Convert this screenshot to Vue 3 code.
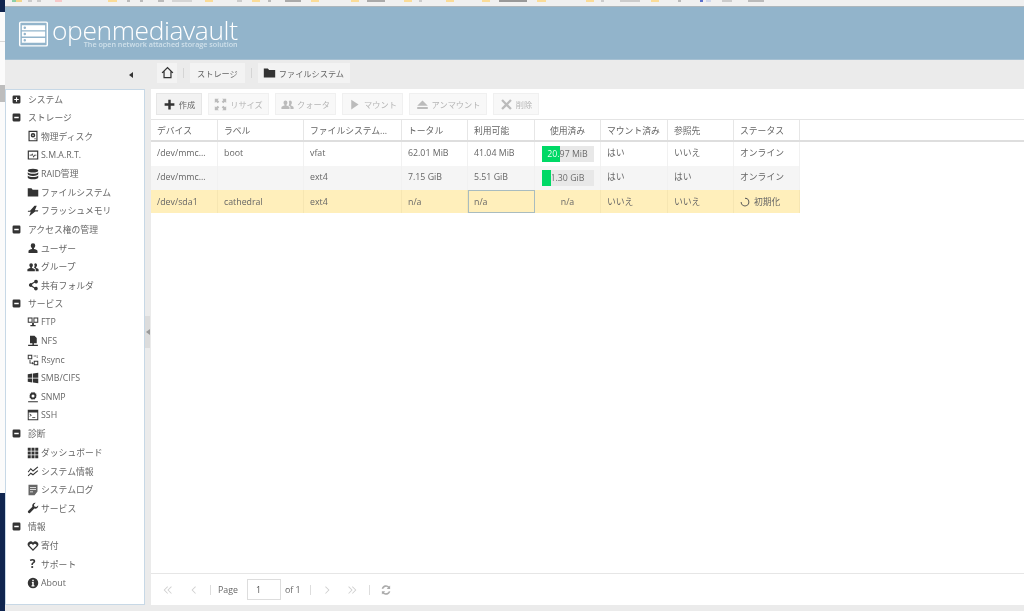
<script setup>
// svg paths, all on a 16x16 box, even-odd fill
const icons = {
  plusBox: 'M3 1h10a2 2 0 0 1 2 2v10a2 2 0 0 1-2 2H3a2 2 0 0 1-2-2V3a2 2 0 0 1 2-2z M7 4v3H4v2h3v3h2V9h3V7H9V4z',
  minusBox: 'M3 1h10a2 2 0 0 1 2 2v10a2 2 0 0 1-2 2H3a2 2 0 0 1-2-2V3a2 2 0 0 1 2-2z M4 6.5v3h8v-3z',
  disk: 'M2 1h12v14H2z M3.5 2.5v11h9v-11z M8 4a3 3 0 1 0 0 6 3 3 0 0 0 0-6z M8 6a1 1 0 1 1 0 2 1 1 0 0 1 0-2z M10 11h1.5v1.2H10z',
  smart: 'M1 2h14v12H1z M2.5 3.5v9h11v-9z M3.5 7.5H6l1-2 1.8 4 1-2h2.7v1h-2.1l-1.6 3.2L7 7.5l-.4 1H3.5z',
  raid: 'M8 1c4 0 7 1 7 2.5S12 6 8 6 1 5 1 3.5 4 1 8 1z M1 5.5C2 7 5 7.5 8 7.5s6-.5 7-2V8c0 1.5-3 2.5-7 2.5S1 9.5 1 8z M1 10c1 1.5 4 2 7 2s6-.5 7-2v2.5C15 14 12 15 8 15s-7-1-7-2.5z',
  folder: 'M1 3h5l1.5 2H15v9H1z',
  flash: 'M10 1 4 7.5H1.5L1 9h4l-2 6 8-6.5h3.5L15 7h-4.5L13 1z',
  user: 'M8 1.5a3 3 0 0 1 3 3c0 1.5-.8 3-1.7 3.6v1.2c2 .6 4.7 1.3 4.7 2.7v2.5H2V12c0-1.4 2.7-2.1 4.7-2.7V8.1C5.8 7.5 5 6 5 4.5a3 3 0 0 1 3-3z',
  group: 'M5.5 3a2.4 2.4 0 0 1 2.4 2.4c0 1.2-.6 2.4-1.3 2.9v1c1.6.5 3.9 1 3.9 2.2v2H.5v-2c0-1.2 2.3-1.7 3.9-2.2v-1C3.7 7.8 3.1 6.6 3.1 5.4A2.4 2.4 0 0 1 5.5 3z M11 3a2.4 2.4 0 0 1 2.4 2.4c0 1.2-.6 2.4-1.3 2.9v1c1.4.4 3.4 1 3.4 2.2v2h-3.9v-2c0-1-1-1.8-2.3-2.4.4-.6.8-1.6.8-2.7 0-.7-.2-1.3-.5-1.8A2.4 2.4 0 0 1 11 3z',
  share: 'M12 1a2.5 2.5 0 1 1-1.9 4.1L6.9 7a2.6 2.6 0 0 1 0 2l3.2 1.9a2.5 2.5 0 1 1-.7 1.3L6 10.3a2.5 2.5 0 1 1 0-4.6l3.5-2A2.5 2.5 0 0 1 12 1z',
  ftp: 'M1 2h6.4v7H1z M2.3 3.3v4.4h3.8V3.3z M8.6 2H15v7H8.6z M9.9 3.3v4.4h3.8V3.3z M6.8 9h2.4v3h2.3v1.8h-7V12h2.3z',
  nfs: 'M4 1h6l3 3v7H4z M7.2 11h2v2h5.3v1.5h-13V13h5.7z',
  rsync: 'M1 1h6v6H1z M2.3 2.3v3.4h3.4V2.3z M9 9h6v6H9z M10.3 10.3v3.4h3.4v-3.4z M3.4 8h1.2v3.6h2.2v-1.2L9 12.2 6.8 14v-1.2H3.4z M9 2h1.2v1.2H9z M11 2h1.2v1.2H11z M13 2h1.2v1.2H13z M13 4.2h1.2v1.2H13z',
  windows: 'M1 3l6-1v5.5H1z M8 2l7-1v6.5H8z M1 8.5h6V14l-6-1z M8 8.5h7V15l-7-1z',
  snmp: 'M8 1l1 1.3 1.6-.5.4 1.6 1.6.4-.5 1.6L13 6.5l-1.1 1.1.5 1.6-1.6.4-.4 1.6-1.6-.5L8 12l-1-1.3-1.6.5-.4-1.6-1.6-.4.5-1.6L3 6.5l1.1-1.1-.5-1.6 1.6-.4.4-1.6 1.6.5z M8 4.5a2 2 0 1 0 0 4 2 2 0 0 0 0-4z M1.5 13.5h13V15h-13z',
  ssh: 'M1 1h14v14H1z M2.3 4.5v9.2h11.4V4.5z M3.5 6l3 2.2-3 2.2V9.2l1.5-1-1.5-1z M7 10.5h4v1H7z',
  grid: 'M1 1h4v4H1z M6 1h4v4H6z M11 1h4v4h-4z M1 6h4v4H1z M6 6h4v4H6z M11 6h4v4h-4z M1 11h4v4H1z M6 11h4v4H6z M11 11h4v4h-4z',
  chart: 'M1 9l4-5 3 3 6-5 1 1-7 6-3-3-3 4z M1 14l4-4 3 2 6-5 1 1-7 6-3-2-3 3z',
  log: 'M2 1h12v9l-4 5H2z M4 4v1h8V4z M4 7v1h8V7z M4 10v1h4v-1z',
  wrench: 'M11 1a4 4 0 0 0-3.8 5.2L1.5 12A1.8 1.8 0 0 0 4 14.5l5.8-5.7A4 4 0 0 0 15 4.5l-2.5 2.3-2.6-.7-.7-2.6L11.5 1z',
  heart: 'M8 14.5 1.8 8.2A3.8 3.8 0 0 1 8 3.4a3.8 3.8 0 0 1 6.2 4.8z M8 12.2l4.8-5A2.2 2.2 0 0 0 9 5.8L8 7 7 5.8a2.2 2.2 0 0 0-3.8 1.4z',
  info: 'M8 1a7 7 0 1 1 0 14A7 7 0 0 1 8 1z M7 3.5v2h2v-2z M6.5 6.5V8H7v3H6v1.5h4V11H9V6.5z',
  home: 'M8 1 .8 8l1 1L3 7.9V15h10V7.9L14.2 9l1-1z M8 3.2l3.5 3.4v6.9h-7V6.6z',
  plus: 'M6.5 2h3v4.5H14v3H9.5V14h-3V9.5H2v-3h4.5z',
  resize: 'M1 1h5L4.5 2.5l2 2-2 2-2-2L1 6z M15 1v5l-1.5-1.5-2 2-2-2 2-2L10 1z M1 15v-5l1.5 1.5 2-2 2 2-2 2L6 15z M15 15h-5l1.5-1.5-2-2 2-2 2 2L15 10z',
  play: 'M4 2l9 6-9 6z',
  eject: 'M8 3l6.5 6.5h-13z M1.5 11h13v2.5h-13z',
  cross: 'M3.5 1.5 8 6l4.5-4.5 2 2L10 8l4.5 4.5-2 2L8 10l-4.5 4.5-2-2L6 8 1.5 3.5z',
  first: 'M7 2l1 1-5 5 5 5-1 1-6-6z M13 2l1 1-5 5 5 5-1 1-6-6z',
  prev: 'M10 2l1 1-5 5 5 5-1 1-6-6z',
  next: 'M6 2 5 3l5 5-5 5 1 1 6-6z',
  last: 'M3 2 2 3l5 5-5 5 1 1 6-6z M9 2 8 3l5 5-5 5 1 1 6-6z',
  refresh: 'M13.5 2v4.5H9l1.7-1.7A4 4 0 0 0 4.2 6.5l-2-.6a6 6 0 0 1 10-2.5z M2.5 14V9.5H7l-1.7 1.7a4 4 0 0 0 6.5-1.7l2 .6a6 6 0 0 1-10 2.5z',
  spinner: 'M8 1a7 7 0 1 1-7 7h1.6A5.4 5.4 0 1 0 8 2.6z',
  logo: 'M3 1h26a2 2 0 0 1 2 2v22a2 2 0 0 1-2 2H3a2 2 0 0 1-2-2V3a2 2 0 0 1 2-2z M3 2.5a.5.5 0 0 0-.5.5v22a.5.5 0 0 0 .5.5h26a.5.5 0 0 0 .5-.5V3a.5.5 0 0 0-.5-.5z M4 5h24v5H4z M4 11.5h24v5H4z M4 18h24v5H4z M7 6.2a1.3 1.3 0 1 0 0 2.6 1.3 1.3 0 0 0 0-2.6z M7 12.7a1.3 1.3 0 1 0 0 2.6 1.3 1.3 0 0 0 0-2.6z M7 19.2a1.3 1.3 0 1 0 0 2.6 1.3 1.3 0 0 0 0-2.6z',
};

const navItems = [
  { label: 'システム', box: 'plusBox' },
  { label: 'ストレージ', box: 'minusBox' },
  { label: '物理ディスク', icon: 'disk' },
  { label: 'S.M.A.R.T.', icon: 'smart' },
  { label: 'RAID管理', icon: 'raid' },
  { label: 'ファイルシステム', icon: 'folder' },
  { label: 'フラッシュメモリ', icon: 'flash' },
  { label: 'アクセス権の管理', box: 'minusBox' },
  { label: 'ユーザー', icon: 'user' },
  { label: 'グループ', icon: 'group' },
  { label: '共有フォルダ', icon: 'share' },
  { label: 'サービス', box: 'minusBox' },
  { label: 'FTP', icon: 'ftp' },
  { label: 'NFS', icon: 'nfs' },
  { label: 'Rsync', icon: 'rsync' },
  { label: 'SMB/CIFS', icon: 'windows' },
  { label: 'SNMP', icon: 'snmp' },
  { label: 'SSH', icon: 'ssh' },
  { label: '診断', box: 'minusBox' },
  { label: 'ダッシュボード', icon: 'grid' },
  { label: 'システム情報', icon: 'chart' },
  { label: 'システムログ', icon: 'log' },
  { label: 'サービス', icon: 'wrench' },
  { label: '情報', box: 'minusBox' },
  { label: '寄付', icon: 'heart' },
  { label: 'サポート', glyph: '?' },
  { label: 'About', icon: 'info' },
];

const tools = [
  { label: '作成', icon: 'plus', width: 46, active: true },
  { label: 'リサイズ', icon: 'resize', width: 61 },
  { label: 'クォータ', icon: 'group', width: 61 },
  { label: 'マウント', icon: 'play', width: 61 },
  { label: 'アンマウント', icon: 'eject', width: 78 },
  { label: '削除', icon: 'cross', width: 46 },
];

const columns = ['デバイス', 'ラベル', 'ファイルシステム...', 'トータル', '利用可能', '使用済み', 'マウント済み', '参照先', 'ステータス'];

const rows = [
  { device: '/dev/mmc...', label: 'boot', fs: 'vfat', total: '62.01 MiB', free: '41.04 MiB', used: '20.97 MiB', pct: 35, mounted: 'はい', ref: 'いいえ', status: 'オンライン' },
  { device: '/dev/mmc...', label: '', fs: 'ext4', total: '7.15 GiB', free: '5.51 GiB', used: '1.30 GiB', pct: 19, mounted: 'はい', ref: 'はい', status: 'オンライン' },
  { device: '/dev/sda1', label: 'cathedral', fs: 'ext4', total: 'n/a', free: 'n/a', used: 'n/a', mounted: 'いいえ', ref: 'いいえ', status: '初期化', busy: true },
];

// what is left of the browser's bookmarks bar above the header
const bookmarks = [
  [12, 6, '#8fd0a8'], [16, 6, '#f3d58c'], [28, 4, '#ccc'], [37, 4, '#ccc'], [55, 7, '#f7c9c9'],
  [108, 9, '#fbdc98'], [127, 3, '#bbb'], [140, 3, '#bbb'], [158, 6, '#bbb'], [172, 20, '#d5d5d5'],
  [205, 8, '#fbdc98'], [237, 5, '#ccc'], [252, 8, '#fbdc98'], [268, 3, '#bbb'], [285, 16, '#aaa'],
  [311, 8, '#fbdc98'], [351, 8, '#fbdc98'], [367, 18, '#aaa'], [404, 8, '#fbdc98'], [419, 3, '#ccc'],
  [446, 8, '#fbdc98'], [482, 8, '#fbdc98'], [499, 28, '#999'], [537, 9, '#fbdc98'], [586, 8, '#fbdc98'],
  [601, 3, '#ccc'], [620, 20, '#ccc'], [651, 8, '#fbdc98'], [678, 3, '#bbb'], [700, 3, '#5a70cc'], [706, 5, '#d0d8ec'],
  [722, 10, '#ccc'], [748, 16, '#bbb'],
];

// white over the green part of the bar, grey after it, on one label
const barLabel = (pct) => ({
  backgroundImage: `linear-gradient(to right, #fff ${pct}%, #666 ${pct}%)`,
});
</script>

<template>
  <div class="page">
    <div class="strip">
      <div class="strip-dark"></div>
      <div class="strip-white strip-a"></div>
      <div class="strip-white strip-b"></div>
      <div class="strip-gray"></div>
      <div class="strip-white strip-low"></div>
      <div class="strip-dark strip-end"></div>
    </div>

    <div class="desk">
      <svg class="bookmarks" width="1019" height="6" viewBox="5 0 1019 6">
        <rect v-for="b in bookmarks" :key="b[0]" :x="b[0]" y="0" :width="b[1]" height="2" :fill="b[2]" />
      </svg>

      <header class="banner">
        <svg class="logo-mark" width="31" height="28" viewBox="0 0 32 28">
          <path :d="icons.logo" fill-rule="evenodd" fill="#fff" />
        </svg>
        <div class="logo-text">
          <div class="logo-name">openmediavault</div>
          <div class="logo-sub">The open network attached storage solution</div>
        </div>
      </header>

      <div class="work">
        <aside class="side">
          <div class="side-head"><span class="arrow-left"></span></div>
          <nav class="nav">
            <div v-for="item in navItems" :key="item.label + (item.icon || item.box || '')" class="nav-row" :class="{ 'nav-top': item.box }">
              <svg v-if="item.box" class="nav-box" viewBox="0 0 16 16"><path :d="icons[item.box]" fill-rule="evenodd" /></svg>
              <span v-else-if="item.glyph" class="nav-icon nav-glyph">{{ item.glyph }}</span>
              <svg v-else class="nav-icon" :class="{ 'icon-soft': item.icon === 'log' }" viewBox="0 0 16 16"><path :d="icons[item.icon]" fill-rule="evenodd" /></svg>
              <span>{{ item.label }}</span>
            </div>
          </nav>
        </aside>

        <div class="splitter">
          <div class="split-handle"><span class="arrow-left arrow-soft"></span></div>
        </div>

        <main class="main">
          <div class="crumbs">
            <span class="crumb crumb-home"><svg viewBox="0 0 16 16"><path :d="icons.home" fill-rule="evenodd" /></svg></span>
            <span class="crumb-sep"></span>
            <span class="crumb">ストレージ</span>
            <span class="crumb-sep"></span>
            <span class="crumb crumb-folder"><svg viewBox="0 0 16 16"><path :d="icons.folder" /></svg>ファイルシステム</span>
          </div>

          <section class="panel">
            <div class="toolbar">
              <button v-for="t in tools" :key="t.label" class="tool" :class="{ 'tool-on': t.active }" :style="{ width: t.width + 'px' }">
                <svg viewBox="0 0 16 16"><path :d="icons[t.icon]" fill-rule="evenodd" /></svg>
                {{ t.label }}
              </button>
            </div>

            <div class="grid-head cols">
              <div v-for="(c, i) in columns" :key="c" class="head-cell" :class="{ center: i === 5 }">{{ c }}</div>
            </div>

            <div v-for="(r, i) in rows" :key="i" class="cols row" :class="['row-' + i, { 'row-busy': r.busy }]">
              <div class="cell">{{ r.device }}</div>
              <div class="cell">{{ r.label }}</div>
              <div class="cell">{{ r.fs }}</div>
              <div class="cell">{{ r.total }}</div>
              <div class="cell" :class="{ 'cell-picked': r.busy }">{{ r.free }}</div>
              <div class="cell center">
                <div v-if="r.pct" class="bar">
                  <div class="bar-fill" :style="{ width: r.pct + '%' }"></div>
                  <span class="bar-label" :style="barLabel(r.pct)">{{ r.used }}</span>
                </div>
                <template v-else>{{ r.used }}</template>
              </div>
              <div class="cell">{{ r.mounted }}</div>
              <div class="cell">{{ r.ref }}</div>
              <div class="cell">
                <svg v-if="r.busy" class="spin" viewBox="0 0 16 16"><path :d="icons.spinner" fill-rule="evenodd" /></svg>
                {{ r.status }}
              </div>
            </div>

            <div class="grid-empty"></div>

            <div class="pager">
              <svg class="pg pg-first" viewBox="0 0 16 16"><path :d="icons.first" /></svg>
              <svg class="pg pg-prev" viewBox="0 0 16 16"><path :d="icons.prev" /></svg>
              <span class="pg-sep pg-sep-a"></span>
              <span class="pg-text">Page</span>
              <span class="pg-input">1</span>
              <span class="pg-text">of 1</span>
              <span class="pg-sep pg-sep-b"></span>
              <svg class="pg pg-next" viewBox="0 0 16 16"><path :d="icons.next" /></svg>
              <svg class="pg pg-last" viewBox="0 0 16 16"><path :d="icons.last" /></svg>
              <span class="pg-sep pg-sep-c"></span>
              <svg class="pg pg-refresh" viewBox="0 0 16 16"><path :d="icons.refresh" /></svg>
            </div>
          </section>
        </main>
      </div>
    </div>
  </div>
</template>

<style scoped>
.page {
  display: flex;
  width: 1024px;
  height: 611px;
  overflow: hidden;
  font-family: "Open Sans", "Noto Sans CJK JP", sans-serif;
  font-size: 8.8px;
  color: #666;
  filter: blur(0.3px); /* the reference is a rescaled capture */
}

/* slice of the neighbouring window on the far left */
.strip {
  width: 5px;
  flex: none;
  display: flex;
  flex-direction: column;
  background: #fff;
}
.strip-dark {
  height: 12px;
  background: #10254f;
}
.strip-white {
  background: #fbfbfb;
}
.strip-a {
  height: 29px;
  border-bottom: 1px solid #d8d8d8;
}
.strip-b {
  height: 43px;
}
.strip-gray {
  height: 17px;
  background: #bdbdbd;
}
.strip-low {
  height: 391px;
}
.strip-end {
  height: 118px;
}

.desk {
  flex: 1;
  min-width: 0;
  display: flex;
  flex-direction: column;
  background: #ebebeb;
}

.bookmarks {
  display: block;
  flex: none;
  background: #f0f0f0;
}

.banner {
  height: 54px;
  flex: none;
  box-sizing: border-box;
  display: flex;
  align-items: center;
  padding-left: 13px;
  background: #92b4cb;
  border-top: 1px solid #adb7bd;
  border-bottom: 1px solid #a6c0d2;
  color: #fff;
}
.logo-mark {
  flex: none;
  margin-top: 1px;
}
.logo-text {
  margin-left: 3px;
  margin-bottom: 2px;
  text-align: right;
}
.logo-name {
  font-family: "Open Sans", sans-serif;
  font-weight: 300;
  font-size: 26.4px;
  line-height: 26px;
  letter-spacing: -0.4px;
}
.logo-sub {
  font-size: 7.2px;
  line-height: 8px;
  margin-top: -3px;
  font-weight: 600;
  color: #cfe0ea;
}

.work {
  flex: 1;
  min-height: 0;
  display: flex;
}

.side {
  width: 140px;
  flex: none;
  display: flex;
  flex-direction: column;
}
.side-head {
  height: 29px;
  flex: none;
  display: flex;
  align-items: center;
  justify-content: flex-end;
  padding-right: 12px;
  box-sizing: border-box;
}
.arrow-left {
  width: 0;
  height: 0;
  border-top: 3.5px solid transparent;
  border-bottom: 3.5px solid transparent;
  border-right: 4px solid #333;
}
.arrow-soft {
  border-right-color: #999;
}

.nav {
  height: 516px;
  box-sizing: border-box;
  background: #fff;
  border: 1px solid #c7d8e6;
}
.nav-row {
  height: 18.6px;
  display: flex;
  align-items: center;
  padding-left: 20.5px;
  white-space: nowrap;
}
.nav-top {
  padding-left: 6px;
}
.nav-box {
  width: 9px;
  height: 9px;
  margin-right: 7px;
  fill: #333;
}
.nav-icon {
  width: 12px;
  height: 12px;
  margin-right: 2.5px;
  fill: #333;
  flex: none;
}
.icon-soft {
  fill: #666;
}
.nav-glyph {
  font-size: 12px;
  font-weight: 700;
  line-height: 12px;
  text-align: center;
  color: #333;
}

.splitter {
  width: 6px;
  flex: none;
  display: flex;
  align-items: center;
  padding-bottom: 7px;
  box-sizing: border-box;
}
.split-handle {
  width: 5px;
  height: 32px;
  background: #dcdcdc;
  display: flex;
  align-items: center;
  justify-content: center;
}

.main {
  flex: 1;
  min-width: 0;
  display: flex;
  flex-direction: column;
}

.crumbs {
  height: 29px;
  flex: none;
  display: flex;
  align-items: center;
  padding: 0 0 4px 6px;
  box-sizing: border-box;
  font-size: 8.2px;
}
.crumb {
  height: 20px;
  display: flex;
  align-items: center;
  gap: 4px;
  padding: 0 7px;
  background: #f3f3f3;
}
.crumb svg {
  width: 13px;
  height: 13px;
  fill: #333;
}
.crumb-home {
  width: 20px;
  padding: 0;
  justify-content: center;
}
.crumb-folder {
  gap: 3px;
  padding: 0 6px 0 5px;
}
.crumb-sep {
  width: 1px;
  height: 10px;
  margin: 0 6px;
  background: #d5d5d5;
}

.panel {
  height: 516px;
  flex: none;
  display: flex;
  flex-direction: column;
  background: #fff;
}

.toolbar {
  height: 30px;
  flex: none;
  box-sizing: border-box;
  display: flex;
  align-items: center;
  gap: 6px;
  padding-left: 5px;
}
.tool {
  height: 22px;
  box-sizing: border-box;
  display: flex;
  align-items: center;
  justify-content: center;
  gap: 3px;
  padding: 0;
  font: inherit;
  font-size: 8.2px;
  color: #b5b5b5;
  background: #f8f8f8;
  border: 1px solid #f0f0f0;
}
.tool svg {
  width: 13px;
  height: 13px;
  flex: none;
  fill: #bbb;
}
.tool-on {
  color: #666;
  background: #f2f2f2;
  border-color: #e6e6e6;
}
.tool-on svg {
  fill: #333;
}

.cols {
  display: grid;
  grid-template-columns: 67px 86px 98px 66px 67px 66px 67px 66px 66px;
}

.grid-head {
  height: 23px;
  flex: none;
  box-sizing: border-box;
  border-top: 1px solid #e4e4e4;
  border-bottom: 2px solid #dedede;
}
.head-cell {
  display: flex;
  align-items: center;
  padding-left: 6px;
  border-right: 1px solid #e6e6e6;
  white-space: nowrap;
  overflow: hidden;
}
.head-cell.center {
  justify-content: center;
  padding-left: 0;
}

.row {
  height: 24px;
  flex: none;
  width: 649px;
}
.row-1 {
  background: #f5f5f5;
}
.row-busy {
  height: 23px;
  background: #ffefbb;
}
.cell {
  display: flex;
  align-items: center;
  gap: 4px;
  padding: 0 0 3px 6px;
  border-right: 1px solid #f1f1f1;
  white-space: nowrap;
  overflow: hidden;
}
.cell.center {
  justify-content: center;
  padding: 0;
}
.row-busy .cell {
  padding-bottom: 0;
  border-right-color: #f6e6b2;
}
.row-busy .cell-picked {
  border: 1px solid #a9bcbf;
  padding-left: 5px;
}

.bar {
  position: relative;
  width: 52px;
  height: 16px;
  background: #e8e8e8;
  display: flex;
  align-items: center;
  justify-content: center;
}
.bar-fill {
  position: absolute;
  left: 0;
  top: 0;
  bottom: 0;
  background: #00d966;
}
.bar-label {
  position: relative;
  width: 100%;
  text-align: center;
  color: transparent;
  -webkit-background-clip: text;
  background-clip: text;
}
.spin {
  width: 10px;
  height: 10px;
  fill: #555;
  flex: none;
}

.grid-empty {
  flex: 1;
}

.pager {
  height: 32px;
  flex: none;
  box-sizing: border-box;
  display: flex;
  align-items: center;
  padding-left: 12px;
  border-top: 1px solid #e6e6e6;
}
.pg {
  width: 10px;
  height: 10px;
  flex: none;
  fill: #d0d0d0;
}
.pg-prev {
  margin-left: 16px;
}
.pg-sep {
  width: 1px;
  height: 10px;
  flex: none;
  background: #ddd;
}
.pg-sep-a {
  margin: 0 7px 0 11px;
}
.pg-sep-b {
  margin: 0 11px 0 10px;
}
.pg-sep-c {
  margin: 0 10px 0 12px;
}
.pg-last {
  margin-left: 14.75px;
}
.pg-refresh {
  width: 12px;
  height: 12px;
  fill: #aaa;
}
.pg-input {
  width: 34px;
  height: 21px;
  box-sizing: border-box;
  margin: 0 4px 0 9px;
  padding-left: 8px;
  display: flex;
  align-items: center;
  color: #555;
  border: 1px solid #ddd;
}
</style>

<style>
html, body {
  margin: 0;
  overflow: hidden;
}
</style>
